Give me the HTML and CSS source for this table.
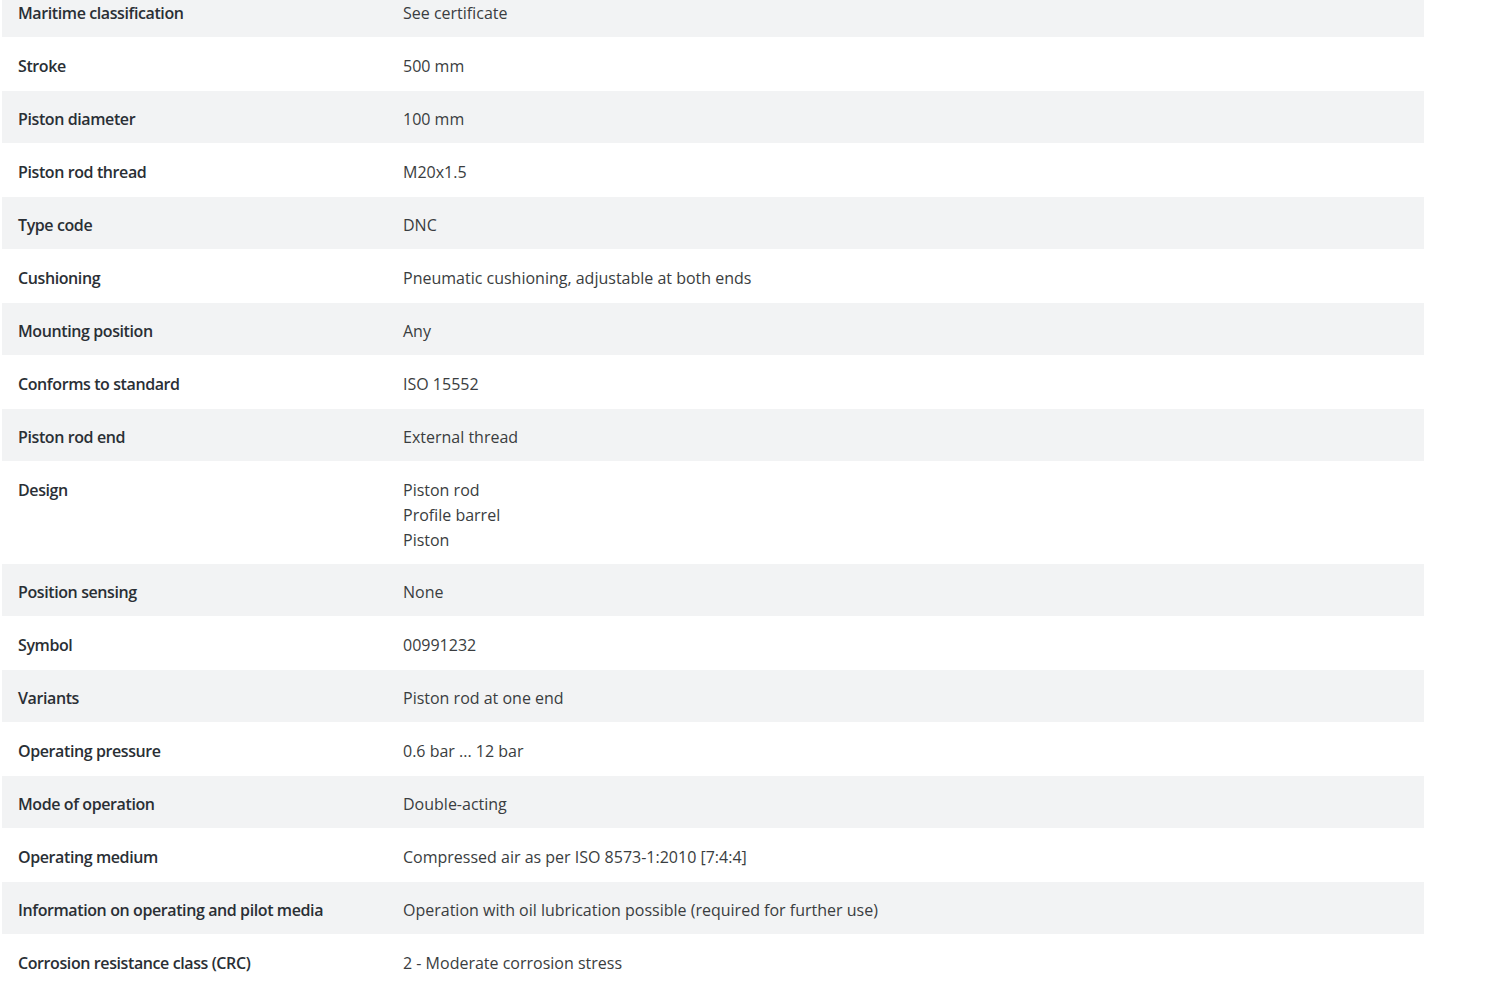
FILE: index.html
```html
<html lang="en">
<head>
    <meta charset="UTF-8">
    <meta name="viewport" content="width=device-width, initial-scale=1.0">
    <title>Technical data</title>
    <link rel="stylesheet" href="styles.css">
</head>
<body>
    <table class="specs">
        <tr><td class="label">Maritime classification</td><td class="value">See certificate</td></tr>
        <tr><td class="label">Stroke</td><td class="value">500 mm</td></tr>
        <tr><td class="label">Piston diameter</td><td class="value">100 mm</td></tr>
        <tr><td class="label">Piston rod thread</td><td class="value">M20x1.5</td></tr>
        <tr><td class="label">Type code</td><td class="value">DNC</td></tr>
        <tr><td class="label">Cushioning</td><td class="value">Pneumatic cushioning, adjustable at both ends</td></tr>
        <tr><td class="label">Mounting position</td><td class="value">Any</td></tr>
        <tr><td class="label">Conforms to standard</td><td class="value">ISO 15552</td></tr>
        <tr><td class="label">Piston rod end</td><td class="value">External thread</td></tr>
        <tr><td class="label">Design</td><td class="value">Piston rod<br>Profile barrel<br>Piston</td></tr>
        <tr><td class="label">Position sensing</td><td class="value">None</td></tr>
        <tr><td class="label">Symbol</td><td class="value">00991232</td></tr>
        <tr><td class="label">Variants</td><td class="value">Piston rod at one end</td></tr>
        <tr><td class="label">Operating pressure</td><td class="value">0.6 bar ... 12 bar</td></tr>
        <tr><td class="label">Mode of operation</td><td class="value">Double-acting</td></tr>
        <tr><td class="label">Operating medium</td><td class="value">Compressed air as per ISO 8573-1:2010 [7:4:4]</td></tr>
        <tr><td class="label">Information on operating and pilot media</td><td class="value">Operation with oil lubrication possible (required for further use)</td></tr>
        <tr><td class="label">Corrosion resistance class (CRC)</td><td class="value">2 - Moderate corrosion stress</td></tr>
    </table>
</body>
</html>
```

FILE: styles.css
```css
*{
    margin: 0; padding: 0;
    box-sizing: border-box;
}
body{
    background: #fff;
    font-family: 'Open Sans', 'Noto Sans', sans-serif;
    font-size: 16px;
    overflow: hidden;
}
.specs{
    border-collapse: collapse;
    width: 1422px;
    margin: -16px 0 0 2px;
}
.specs td{
    vertical-align: top;
    line-height: 25px;
    height: 53px;
    padding: 16px 0 10px 0;
    border-top: 1px solid #fff;
    border-bottom: 1px solid #fff;
}
.specs tr:nth-child(odd) td{
    background-color: #f2f3f4;
}
.label{
    width: 401px;
    padding-left: 16px !important;
    font-weight: 600;
    letter-spacing: -0.4px;
    color: #2a2f35;
}
.value{
    color: #3a3d40;
}
```
